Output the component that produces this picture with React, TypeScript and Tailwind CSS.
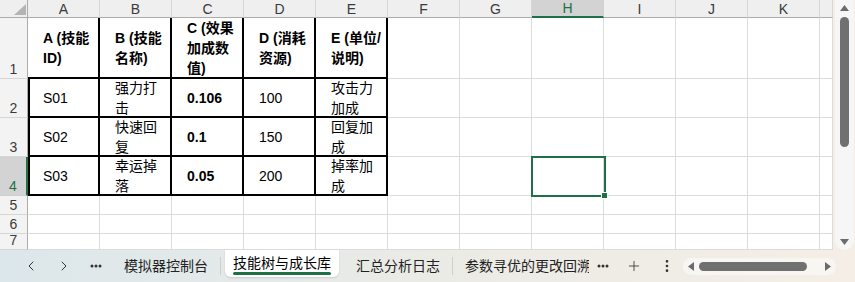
import { ChevronLeft, ChevronRight, Plus, EllipsisVertical } from "lucide-react";

const font = "font-['Liberation_Sans','Noto_Sans_CJK_SC',sans-serif]";

type Cell = { lines: string[]; bold?: boolean };

const colLetters = ["A", "B", "C", "D", "E", "F", "G", "H", "I", "J", "K", ""];

const table: Cell[][] = [
  [
    { lines: ["A (技能", "ID)"], bold: true },
    { lines: ["B (技能", "名称)"], bold: true },
    { lines: ["C (效果", "加成数", "值)"], bold: true },
    { lines: ["D (消耗", "资源)"], bold: true },
    { lines: ["E (单位/", "说明)"], bold: true },
  ],
  [
    { lines: ["S01"] },
    { lines: ["强力打", "击"] },
    { lines: ["0.106"], bold: true },
    { lines: ["100"] },
    { lines: ["攻击力", "加成"] },
  ],
  [
    { lines: ["S02"] },
    { lines: ["快速回", "复"] },
    { lines: ["0.1"], bold: true },
    { lines: ["150"] },
    { lines: ["回复加", "成"] },
  ],
  [
    { lines: ["S03"] },
    { lines: ["幸运掉", "落"] },
    { lines: ["0.05"], bold: true },
    { lines: ["200"] },
    { lines: ["掉率加", "成"] },
  ],
];

const rowNums = [1, 2, 3, 4, 5, 6, 7];

function Dots() {
  return (
    <svg width="12" height="4" viewBox="0 0 12 4" className="shrink-0">
      <circle cx="2" cy="2" r="1.5" fill="#333" />
      <circle cx="6" cy="2" r="1.5" fill="#333" />
      <circle cx="10" cy="2" r="1.5" fill="#333" />
    </svg>
  );
}

function SheetGrid() {
  return (
    <div className="relative grid h-[250px] w-[833px] shrink-0 grid-cols-[28px_repeat(11,72px)_13px] grid-rows-[18px_61px_39px_39px_39px_19px_19px_16px] overflow-hidden bg-white">
      {/* ── Column headers ── */}
      <div className="relative border-r border-b border-[#ababab] bg-[#efefef]">
        <svg width="12" height="11" viewBox="0 0 12 11" className="absolute right-[1px] bottom-[2px]">
          <polygon points="12,0 12,11 0,11" fill="#b4b4b4" />
        </svg>
      </div>
      {colLetters.map((c) =>
        c === "H" ? (
          <div
            key="H"
            className="flex items-center justify-center border-r border-b-2 border-r-[#d0d0d0] border-b-[#1e7145] bg-[#d3d3d3] text-[14px] leading-[18px] text-[#1e7145]"
          >
            H
          </div>
        ) : (
          <div
            key={c || "L"}
            className="flex items-center justify-center border-r border-b border-r-[#d6d6d6] border-b-[#ababab] bg-[#efefef] text-[14px] leading-[18px] text-[#3a3a3a]"
          >
            {c}
          </div>
        )
      )}

      {/* ── Rows ── */}
      {rowNums.map((r) => {
        const selected = r === 4;
        return (
          <div key={r} className="contents">
            <div
              className={
                selected
                  ? "flex items-end justify-center border-r-2 border-b border-r-[#1e7145] border-b-[#d0d0d0] bg-[#d3d3d3] text-[14px] leading-[18px] text-[#1e7145]"
                  : "flex items-end justify-center border-r border-b border-r-[#ababab] border-b-[#d6d6d6] bg-[#f3f3f3] text-[14px] leading-[18px] text-[#3a3a3a]"
              }
            >
              {r}
            </div>
            {colLetters.map((c, ci) => {
              const cell = r <= 4 && ci < 5 ? table[r - 1][ci] : null;
              if (cell) {
                const leftEdge = ci === 0 && r > 1;
                return (
                  <div
                    key={c}
                    className={`flex flex-col justify-center border-r-2 border-b-2 border-black text-[14px] leading-[20px] text-black ${
                      leftEdge ? "border-l-2 pl-[13px]" : "pl-[15px]"
                    } ${cell.bold ? "font-bold" : ""}`}
                  >
                    {cell.lines.map((l) => (
                      <span key={l} className="whitespace-nowrap">
                        {l}
                      </span>
                    ))}
                  </div>
                );
              }
              return <div key={c || "L"} className="border-r border-b border-[#dcdcdc]" />;
            })}
          </div>
        );
      })}

      {/* selected cell H4 */}
      <div className="absolute top-[156px] left-[531px] h-[41px] w-[75px] border-2 border-[#1e7145]">
        <div className="absolute -right-[4px] -bottom-[4px] h-[7px] w-[7px] border border-white bg-[#1e7145]" />
      </div>
    </div>
  );
}

function VScroll() {
  return (
    <div className="flex w-[22px] shrink-0 justify-center">
      <div className="flex h-[250px] w-[19px] flex-col items-center rounded-b-xl bg-[#f6f6f6] pt-[5px]">
        <svg width="9" height="6" viewBox="0 0 9 6">
          <polygon points="4.5,0 9,6 0,6" fill="#6b6b6b" />
        </svg>
        <div className="mt-[6px] h-[130px] w-[9px] rounded-full bg-[#707070]" />
        <div className="flex-1" />
        <svg width="9" height="6" viewBox="0 0 9 6" className="mb-[5px]">
          <polygon points="0,0 9,0 4.5,6" fill="#6b6b6b" />
        </svg>
      </div>
    </div>
  );
}

function TabBar() {
  return (
    <div className="flex h-[32px] items-center text-[14px] text-[#222]">
      <ChevronLeft size={16} strokeWidth={1.5} className="ml-[23px] shrink-0 text-[#333]" />
      <ChevronRight size={16} strokeWidth={1.5} className="ml-[17px] shrink-0 text-[#333]" />
      <div className="ml-[18px]">
        <Dots />
      </div>
      <span className="ml-[22px] whitespace-nowrap leading-[20px]">模拟器控制台</span>
      <div className="ml-[12px] h-[18px] w-px shrink-0 bg-[#cfcfcf]" />
      <div className="relative ml-[4px] flex h-[27px] w-[114px] shrink-0 self-start justify-center rounded-b-md bg-white shadow-[0_1px_2px_rgba(0,0,0,0.12)]">
        <span className="mt-[3px] whitespace-nowrap leading-[20px] text-black">技能树与成长库</span>
        <div className="absolute right-[8px] bottom-[2px] left-[8px] h-[3px] rounded-full bg-[#1e7145]" />
      </div>
      <span className="ml-[17px] whitespace-nowrap leading-[20px]">汇总分析日志</span>
      <div className="ml-[12px] h-[18px] w-px shrink-0 bg-[#cfcfcf]" />
      <div className="ml-[12px] w-[124px] shrink-0 overflow-hidden">
        <span className="whitespace-nowrap leading-[20px]">参数寻优的更改回溯</span>
      </div>
      <div className="ml-[8px]">
        <Dots />
      </div>
      <Plus size={16} strokeWidth={1.25} className="ml-[17px] shrink-0 text-[#333]" />
      <EllipsisVertical size={16} strokeWidth={2} className="ml-[17px] shrink-0 text-[#333]" />
      <div className="ml-[8px] flex h-[17px] w-[153px] shrink-0 items-center rounded-full bg-[#f8f6f3] px-[5px]">
        <svg width="6" height="9" viewBox="0 0 6 9">
          <polygon points="6,0 6,9 0,4.5" fill="#6b6b6b" />
        </svg>
        <div className="ml-[5px] h-[9px] w-[108px] rounded-full bg-[#707070]" />
        <div className="flex-1" />
        <svg width="6" height="9" viewBox="0 0 6 9">
          <polygon points="0,0 6,4.5 0,9" fill="#6b6b6b" />
        </svg>
      </div>
    </div>
  );
}

export default function App() {
  return (
    <div className={`flex h-[282px] w-[855px] flex-col overflow-hidden bg-linear-to-r from-[#dce7eb] via-[#ebebe6] to-[#f4eee6] ${font}`}>
      <div className="flex h-[250px]">
        <SheetGrid />
        <VScroll />
      </div>
      <TabBar />
    </div>
  );
}
